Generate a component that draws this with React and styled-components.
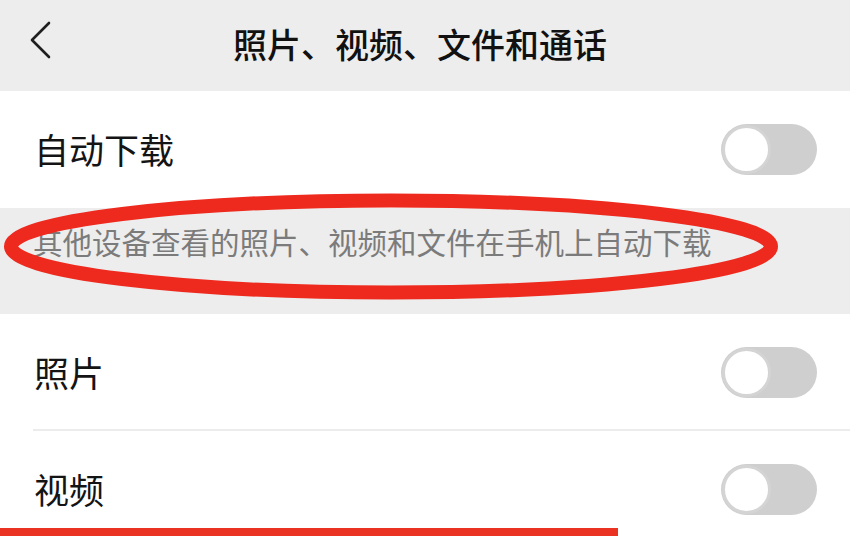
import styled, { createGlobalStyle } from "styled-components";

const GlobalStyle = createGlobalStyle`
	html, body {
		margin: 0;
		padding: 0;
		background: #ffffff;
		overflow: hidden;
	}
	* {
		box-sizing: border-box;
	}
`;

const settings = [{ label: "照片" }, { label: "视频" }];

const App = () => {
	return (
		<>
			<GlobalStyle />
			<Page>
				<Header>
					<BackButton aria-label="返回">
						<svg width="26" height="40" viewBox="0 0 26 40">
							<polyline
								points="19,3 2,20 19,37"
								fill="none"
								stroke="#1f1f1f"
								strokeWidth="2.6"
								strokeLinecap="round"
								strokeLinejoin="round"
							/>
						</svg>
					</BackButton>
					<Title>照片、视频、文件和通话</Title>
				</Header>

				<Row>
					<Label>自动下载</Label>
					<Toggle />
				</Row>

				<Note>其他设备查看的照片、视频和文件在手机上自动下载</Note>

				<List>
					{settings.map((item, i) => (
						<Row key={item.label} $divider={i < settings.length - 1}>
							<Label>{item.label}</Label>
							<Toggle />
						</Row>
					))}
				</List>

				{/* annotation marks drawn over the screenshot */}
				<Circle viewBox="0 0 850 536" width="850" height="536">
					<ellipse
						cx="391"
						cy="246.5"
						rx="380"
						ry="46"
						fill="none"
						stroke="#ee2a1f"
						strokeWidth="14"
					/>
				</Circle>
				<Underline />
			</Page>
		</>
	);
};

const Toggle = ({ on = false }) => (
	<Switch $on={on}>
		<Knob $on={on} />
	</Switch>
);

const Page = styled.div`
	position: relative;
	width: 850px;
	height: 536px;
	overflow: hidden;
	background: #ffffff;
	font-family: "Noto Sans CJK SC", "Noto Sans", sans-serif;
`;

const Header = styled.header`
	position: relative;
	height: 91px;
	background: #ededed;
	display: flex;
	align-items: center;
	justify-content: center;
	padding-right: 10px;
	padding-bottom: 4px;
`;

const BackButton = styled.div`
	position: absolute;
	left: 30px;
	top: 20px;
	display: flex;
`;

const Title = styled.h1`
	margin: 0;
	font-size: 34px;
	font-weight: 500;
	color: #111111;
	letter-spacing: 0;
`;

const List = styled.div`
	display: flex;
	flex-direction: column;
`;

const Row = styled.div`
	position: relative;
	height: 117px;
	display: flex;
	align-items: center;
	justify-content: space-between;
	padding: 0 33px 0 34px;
	background: #ffffff;

	&::after {
		content: "";
		display: ${(p) => (p.$divider ? "block" : "none")};
		position: absolute;
		left: 33px;
		right: 0;
		bottom: 0;
		height: 2px;
		background: #ececec;
	}
`;

const Label = styled.span`
	font-size: 35px;
	font-weight: 400;
	color: #141414;
	padding-bottom: 2px;
`;

const Switch = styled.div`
	width: 96px;
	height: 51px;
	border-radius: 26px;
	background: ${(p) => (p.$on ? "#07c160" : "#cfcfcf")};
	display: flex;
	align-items: center;
	justify-content: ${(p) => (p.$on ? "flex-end" : "flex-start")};
	padding: 1px;
`;

const Knob = styled.div`
	width: 49px;
	height: 49px;
	border-radius: 50%;
	background: #ffffff;
	border: 3px solid #d4d4d4;
`;

const Note = styled.div`
	height: 106px;
	background: #ededed;
	padding: 12px 0 0 33px;
	font-size: 29.5px;
	line-height: 42px;
	color: #7b7b7b;
	white-space: nowrap;
`;

const Circle = styled.svg`
	position: absolute;
	left: 0;
	top: 0;
	pointer-events: none;
`;

const Underline = styled.div`
	position: absolute;
	left: 0;
	bottom: 0;
	width: 618px;
	height: 8px;
	background: #ea3323;
`;

export default App;
